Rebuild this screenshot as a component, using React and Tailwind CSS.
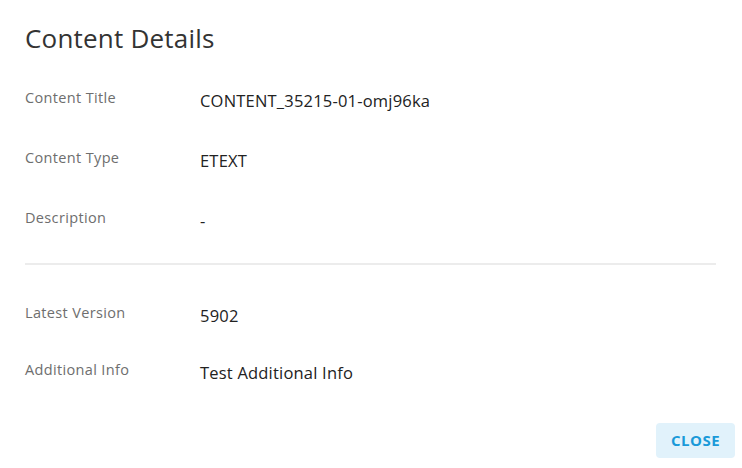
const rows = [
  { label: 'Content Title', value: 'CONTENT_35215-01-omj96ka' },
  { label: 'Content Type', value: 'ETEXT' },
  { label: 'Description', value: '-' },
]

const moreRows = [
  { label: 'Latest Version', value: '5902' },
  { label: 'Additional Info', value: 'Test Additional Info' },
]

function DetailRow({ label, value }) {
  return (
    <div className="flex h-[60px] items-start">
      <div className="w-[175px] shrink-0 text-[14.5px] leading-5 tracking-[0.35px] text-[#6e6e6e]">{label}</div>
      <div className="pt-[3px] text-[16.5px] leading-5 tracking-[0.2px] text-[#222]">{value}</div>
    </div>
  )
}

export default function App() {
  return (
    <div className="h-[468px] w-[742px] bg-white font-['Open_Sans',sans-serif]">
      {/* Header */}
      <div className="px-[25px] pt-[22px] pb-[34px]">
        <h2 className="text-[26px] leading-8 tracking-[0.2px] text-[#333]">Content Details</h2>
      </div>

      <div className="pr-[26px] pl-[25px]">
        {rows.map((row) => (
          <DetailRow key={row.label} {...row} />
        ))}
        <div className="mt-[-5px] mb-[38px] h-[2px] bg-[#ececec]" />
        <div className="[&>div:first-child]:h-[57px]">
          {moreRows.map((row) => (
            <DetailRow key={row.label} {...row} />
          ))}
        </div>
      </div>

      <div className="flex justify-end px-[7px] pt-[3px]">
        <button
          type="button"
          className="h-[35px] w-[79px] rounded-[4px] bg-[#e1f2fb] text-[15px] font-bold tracking-[0.5px] text-[#1a9ad9]"
        >
          CLOSE
        </button>
      </div>
    </div>
  )
}
